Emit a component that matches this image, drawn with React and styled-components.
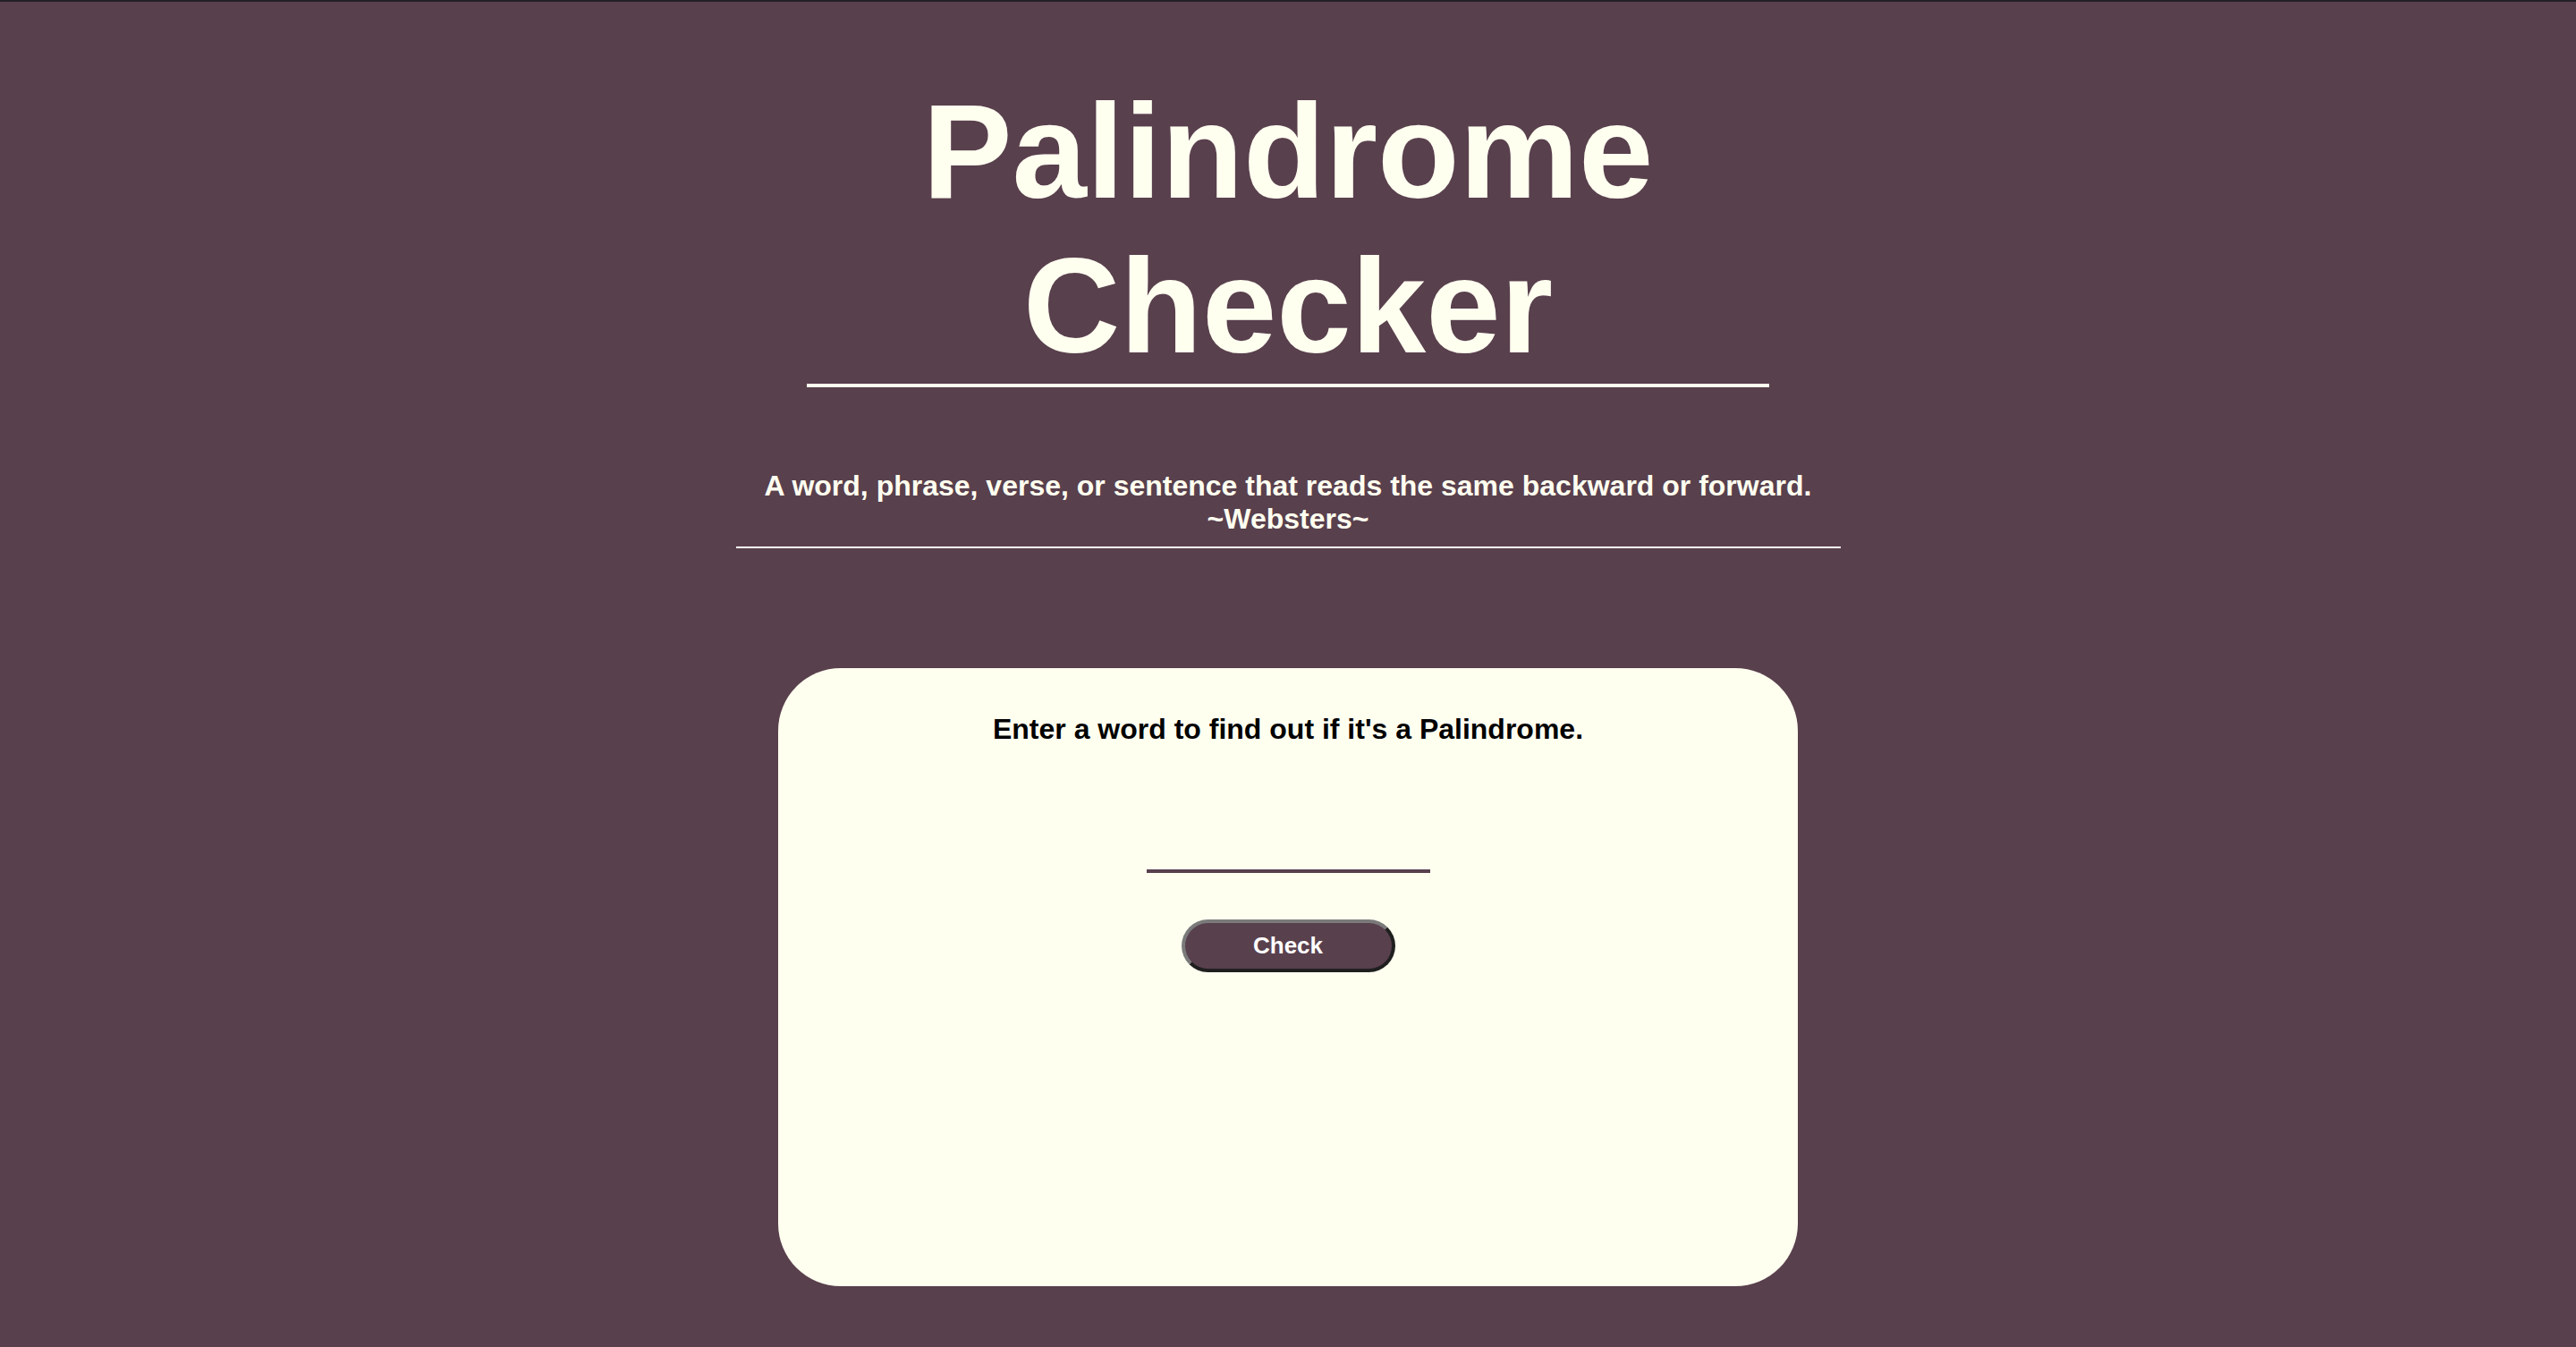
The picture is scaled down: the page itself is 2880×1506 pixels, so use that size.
import React from "react";
import styled, { createGlobalStyle } from "styled-components";

const GlobalStyle = createGlobalStyle`
  html {
    background: #59404d;
  }
  body {
    margin: 0;
    background: #59404d;
    border-top: 2px solid #232027;
    font-family: "Liberation Sans", Arial, sans-serif;
  }
`;

const Page = styled.main`
  display: flex;
  flex-direction: column;
  align-items: center;
`;

const Title = styled.h1`
  margin: 81px 0 0;
  width: 1076px;
  font-size: 150px;
  font-weight: 700;
  line-height: normal;
  color: #fffff0;
  text-align: center;
  border-bottom: 4px solid #fffff0;
`;

const Definition = styled.p`
  margin: 92px 0 0;
  width: 1235px;
  padding-bottom: 12px;
  font-size: 32px;
  font-weight: 700;
  line-height: normal;
  color: #fffff0;
  text-align: center;
  border-bottom: 2px solid #ffffff;
`;

const Card = styled.section`
  margin-top: 134px;
  box-sizing: border-box;
  width: 1140px;
  height: 691px;
  padding-top: 50px;
  border-radius: 70px;
  background: #fffff0;
  display: flex;
  flex-direction: column;
  align-items: center;
`;

const Prompt = styled.h2`
  margin: 0;
  font-size: 32px;
  font-weight: 700;
  line-height: normal;
  color: #000;
  text-align: center;
`;

const WordInput = styled.input`
  margin-top: 98px;
  box-sizing: border-box;
  width: 317px;
  height: 44px;
  padding: 0 4px;
  border: none;
  border-bottom: 4px solid #59404d;
  background: transparent;
  font-family: "Liberation Sans", Arial, sans-serif;
  font-size: 28px;
  color: #000;
  outline: none;
`;

const CheckButton = styled.button`
  margin-top: 52px;
  box-sizing: border-box;
  width: 239px;
  height: 59px;
  border-radius: 30px;
  border: 4px solid;
  border-color: #7a7a7a #1f1f1f #1f1f1f #7a7a7a;
  background: #59404d;
  color: #ffffff;
  font-family: "Liberation Sans", Arial, sans-serif;
  font-size: 26px;
  font-weight: 700;
  cursor: pointer;
`;

export default function App() {
  return (
    <>
      <GlobalStyle />
      <Page>
        <Title>Palindrome Checker</Title>
        <Definition>
          A word, phrase, verse, or sentence that reads the same backward or forward.
          <br />
          ~Websters~
        </Definition>
        <Card>
          <Prompt>Enter a word to find out if it's a Palindrome.</Prompt>
          <WordInput type="text" aria-label="word" />
          <CheckButton type="button">Check</CheckButton>
        </Card>
      </Page>
    </>
  );
}
